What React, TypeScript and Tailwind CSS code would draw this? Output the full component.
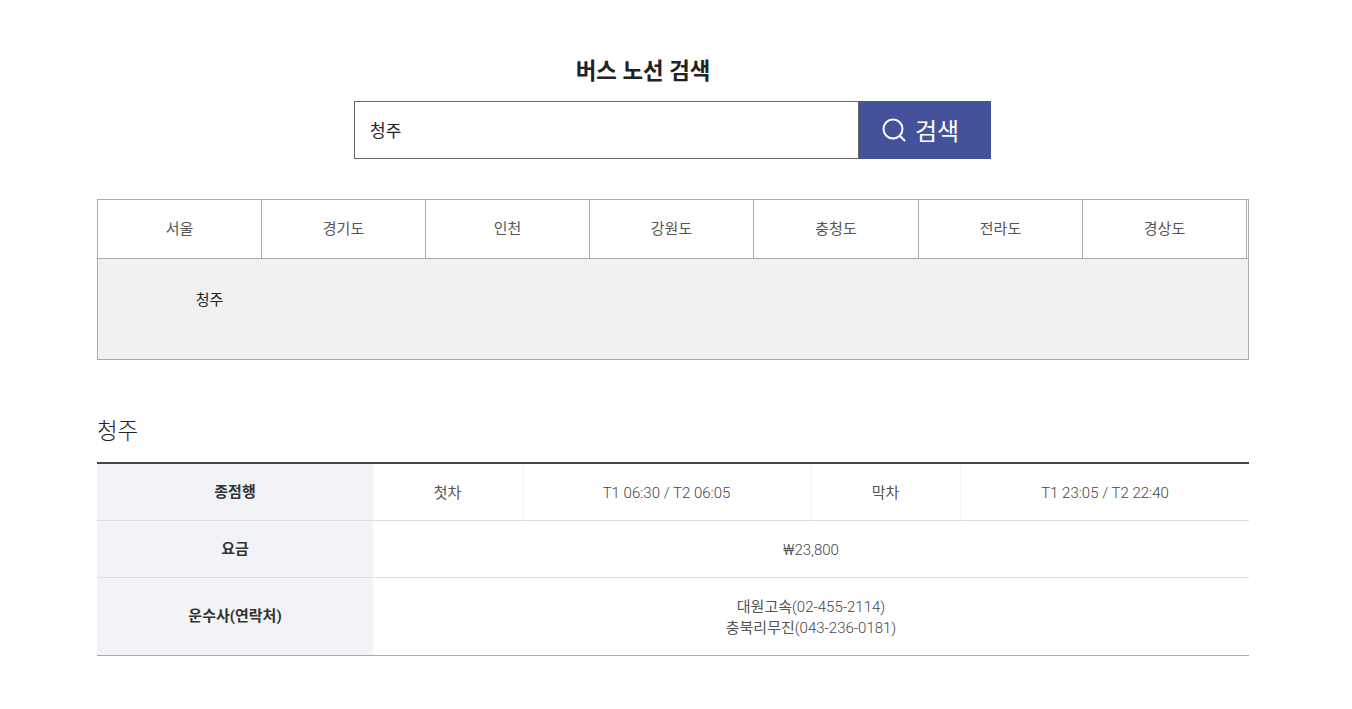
import React from "react";

const regions = ["서울", "경기도", "인천", "강원도", "충청도", "전라도", "경상도"];

const thClass = "bg-[#f1f3f7] font-bold text-[15px] text-[#333] text-center border-b border-[#ddd]";
const tdClass = "text-center text-[15px] font-light text-[#444] border-b border-[#ddd]";
const cellLine = "border-r border-r-[#f1f3f7]";

export default function App() {
  return (
    <div className="bg-white min-h-[709px] pt-[53px] font-['Roboto','Noto_Sans_CJK_KR',sans-serif] text-[#222]">
      <div className="w-[1152px] ml-[97px]">
        <h2 className="w-[1092px] text-center text-[22.4px] leading-[37px] font-bold text-[#222]">버스 노선 검색</h2>

        <form className="flex w-[637px] h-[58px] ml-[257px] mt-[11px]">
          <div className="flex-1 flex items-center pl-[15px] pt-[4px] border border-[#666] text-[17px] text-[#222]">청주</div>
          <button type="button" className="w-[132px] flex items-center justify-center gap-[8px] pr-[10px] bg-[#44529c] text-white text-[24px]">
            <svg width="26" height="26" viewBox="0 0 26 26" fill="none" stroke="currentColor" strokeWidth="2" strokeLinecap="round">
              <circle cx="12" cy="12" r="9.5" />
              <path d="M19 19 L23.5 23.5" />
            </svg>
            <span className="pt-[4px]">검색</span>
          </button>
        </form>

        <div className="mt-[40px] border border-[#aaa] h-[161px]">
          <ul className="flex h-[59px] border-b border-[#aaa]">
            {regions.map((name) => (
              <li
                key={name}
                className={`${name === "충청도" ? "w-[165px]" : "w-[164px]"} flex items-center justify-center border-r border-[#aaa] text-[15px] text-[#555]`}
              >
                {name}
              </li>
            ))}
          </ul>
          <div className="bg-[#f1f1f1] h-[100px]">
            <div className="w-[223px] pt-[30px] text-center text-[15px] leading-[22px] text-[#222]">청주</div>
          </div>
        </div>

        <h3 className="mt-[52px] text-[22.4px] leading-[38px] font-light text-[#222]">청주</h3>

        <table className="mt-[12px] w-full table-fixed border-separate border-spacing-0 border-t-2 border-b border-t-[#444] border-b-[#aaa]">
          <colgroup>
            <col className="w-[276px]" />
            <col className="w-[150px]" />
            <col className="w-[288px]" />
            <col className="w-[150px]" />
            <col className="w-[288px]" />
          </colgroup>
          <tbody>
            <tr className="h-[57px]">
              <th className={thClass}>종점행</th>
              <td className={`${tdClass} ${cellLine} pt-[2px] font-normal text-[#555]`}>첫차</td>
              <td className={`${tdClass} ${cellLine} pt-[2px]`}>T1 06:30 / T2 06:05</td>
              <td className={`${tdClass} ${cellLine} pt-[2px] font-normal text-[#555]`}>막차</td>
              <td className={`${tdClass} pt-[2px]`}>T1 23:05 / T2 22:40</td>
            </tr>
            <tr className="h-[57px]">
              <th className={`${thClass} pt-[1px]`}>요금</th>
              <td colSpan={4} className={`${tdClass} pt-[2px]`}>₩23,800</td>
            </tr>
            <tr className="h-[77px]">
              <th className="bg-[#f1f3f7] font-bold text-[15px] text-[#333] text-center">운수사(연락처)</th>
              <td colSpan={4} className="text-center text-[15px] font-light text-[#444] pt-[2px] leading-[21px]">
                <span className="font-normal text-[#555]">대원고속</span>(02-455-2114)
                <br />
                <span className="font-normal text-[#555]">충북리무진</span>(043-236-0181)
              </td>
            </tr>
          </tbody>
        </table>
      </div>
    </div>
  );
}
